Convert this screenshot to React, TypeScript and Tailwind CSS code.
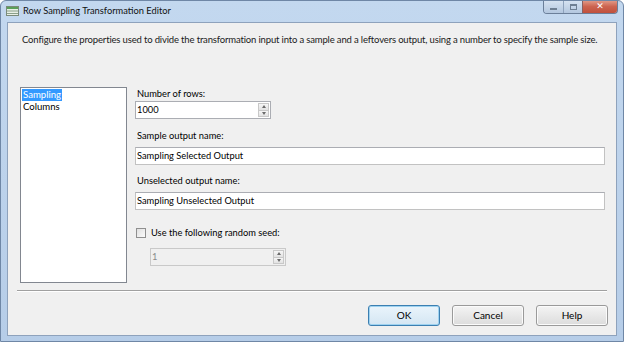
import React from "react";

function Spin({ value, disabled }: { value: string; disabled?: boolean }) {
  return (
    <div
      className={`flex items-stretch w-[136px] h-[18px] border ${
        disabled ? "border-[#c9c9c9] bg-[#f0f0f0] text-[#8a8a8a]" : "border-[#abadb3] bg-white text-black"
      }`}
    >
      <div className="flex-1 pl-[1px] leading-[16px]">{value}</div>
      <div className="flex flex-col w-[11px] my-[1px] mr-[1px]">
        <div className="flex-1 flex items-center justify-center border border-[#c8c8c8] bg-gradient-to-b from-[#f6f6f6] to-[#e2e2e2]">
          <div className="w-0 h-0 border-l-[2.5px] border-r-[2.5px] border-b-[3px] border-l-transparent border-r-transparent border-b-[#6a6a6a]" />
        </div>
        <div className="flex-1 flex items-center justify-center border border-t-0 border-[#c8c8c8] bg-gradient-to-b from-[#f6f6f6] to-[#e2e2e2]">
          <div className="w-0 h-0 border-l-[2.5px] border-r-[2.5px] border-t-[3px] border-l-transparent border-r-transparent border-t-[#6a6a6a]" />
        </div>
      </div>
    </div>
  );
}

function TextBox({ value }: { value: string }) {
  return (
    <div className="w-[470px] h-[18px] border border-[#c2c2c2] border-t-[#abadb3] bg-white pl-[1px] leading-[16px]">
      {value}
    </div>
  );
}

function Button({ label, primary }: { label: string; primary?: boolean }) {
  return (
    <div
      className={`w-[72px] h-[21px] rounded-[3px] border flex items-center justify-center bg-gradient-to-b ${
        primary
          ? "border-[#3c7fb1] from-[#eaf4fb] to-[#d4e6f3] shadow-[inset_0_0_0_1px_#9ed2f0]"
          : "border-[#9a9a9a] from-[#f4f4f4] to-[#dcdcdc] shadow-[inset_0_0_0_1px_#fbfbfb]"
      }`}
    >
      {label}
    </div>
  );
}

export default function App() {
  return (
    <div
      className="w-[624px] h-[342px] flex flex-col bg-gradient-to-b from-[#c3d8ef] to-[#b6cde8] rounded-t-[6px] border border-[#6f87a6] text-[9.3px] text-black overflow-hidden"
      style={{ fontFamily: 'Lato, "Noto Sans", sans-serif' }}
    >
      {/* title bar */}
      <div className="h-[21px] flex items-start shrink-0">
        <div className="flex items-center h-[20px] pl-[5px] gap-[4px]">
          <svg width="13" height="10" viewBox="0 0 13 10">
            <rect x="0.5" y="0.5" width="12" height="9" fill="#e8efe6" stroke="#7a8a7a" />
            <rect x="1" y="1" width="11" height="2" fill="#5aa05a" />
            <line x1="1" y1="5" x2="12" y2="5" stroke="#8aa08a" />
            <line x1="1" y1="7.5" x2="12" y2="7.5" stroke="#8aa08a" />
          </svg>
          <span className="text-[9.3px] text-[#111] whitespace-nowrap">Row Sampling Transformation Editor</span>
        </div>
        <div className="ml-auto mr-[5px] flex h-[14px] -mt-[1px] rounded-b-[4px] border border-t-0 border-[#6b7f99] overflow-hidden">
          <div className="w-[20px] flex items-center justify-center bg-gradient-to-b from-[#d8e4f2] to-[#b3c7df] border-r border-[#8ea2bc]">
            <div className="w-[7px] h-[2px] bg-[#6e7f93] mt-[4px]" />
          </div>
          <div className="w-[19px] flex items-center justify-center bg-gradient-to-b from-[#d8e4f2] to-[#b3c7df] border-r border-[#8a6060]">
            <div className="w-[7px] h-[6px] border border-[#6e7f93] border-t-2" />
          </div>
          <div className="w-[34px] flex items-center justify-center bg-gradient-to-b from-[#e3a08f] via-[#cc6450] to-[#c0503c]">
            <span className="text-white font-bold text-[9px] leading-none" style={{ fontFamily: '"DejaVu Sans", sans-serif' }}>
              ✕
            </span>
          </div>
        </div>
      </div>

      {/* client area */}
      <div className="flex-1 mx-[6px] mb-[5px] bg-[#f0f0f0] border border-[#8ea2bc] flex flex-col">
        <p className="pl-[14px] pt-[10px] text-[9.5px] tracking-[-0.16px] leading-[14px] whitespace-nowrap text-[#1a1a1a]">
          Configure the properties used to divide the transformation input into a sample and a leftovers output, using a number to specify the sample size.
        </p>

        <div className="flex mt-[40px] ml-[12px]">
          <div className="w-[107px] h-[196px] bg-white border border-[#828790] pt-[1px] pl-[1px] text-[9.6px] leading-[12px]">
            <div className="inline-block bg-[#3399ff] text-white px-[1px]">Sampling</div>
            <div className="px-[1px]">Columns</div>
          </div>

          <div className="ml-[8px] flex flex-col">
            <div className="pl-[2px] leading-[14px]">Number of rows:</div>
            <Spin value="1000" />
            <div className="pl-[2px] leading-[14px] mt-[10px]">Sample output name:</div>
            <div className="mt-[4px]">
              <TextBox value="Sampling Selected Output" />
            </div>
            <div className="pl-[2px] leading-[14px] mt-[9px]">Unselected output name:</div>
            <div className="mt-[4px]">
              <TextBox value="Sampling Unselected Output" />
            </div>
            <div className="flex items-center mt-[16px] gap-[5px] leading-[14px]">
              <div className="ml-[1px] w-[10px] h-[10px] border border-[#8f8f8f] bg-gradient-to-br from-[#e0e0e0] to-[#fbfbfb]" />
              <span>Use the following random seed:</span>
            </div>
            <div className="mt-[8px] ml-[15px]">
              <Spin value="1" disabled />
            </div>
          </div>
        </div>

        <div className="mx-[9px] mt-[7px] border-t border-[#a0a0a0] border-b border-b-white" />

        <div className="flex justify-end gap-[12px] mr-[8px] mt-[13px] text-[10px]">
          <Button label="OK" primary />
          <Button label="Cancel" />
          <Button label="Help" />
        </div>
      </div>
    </div>
  );
}
